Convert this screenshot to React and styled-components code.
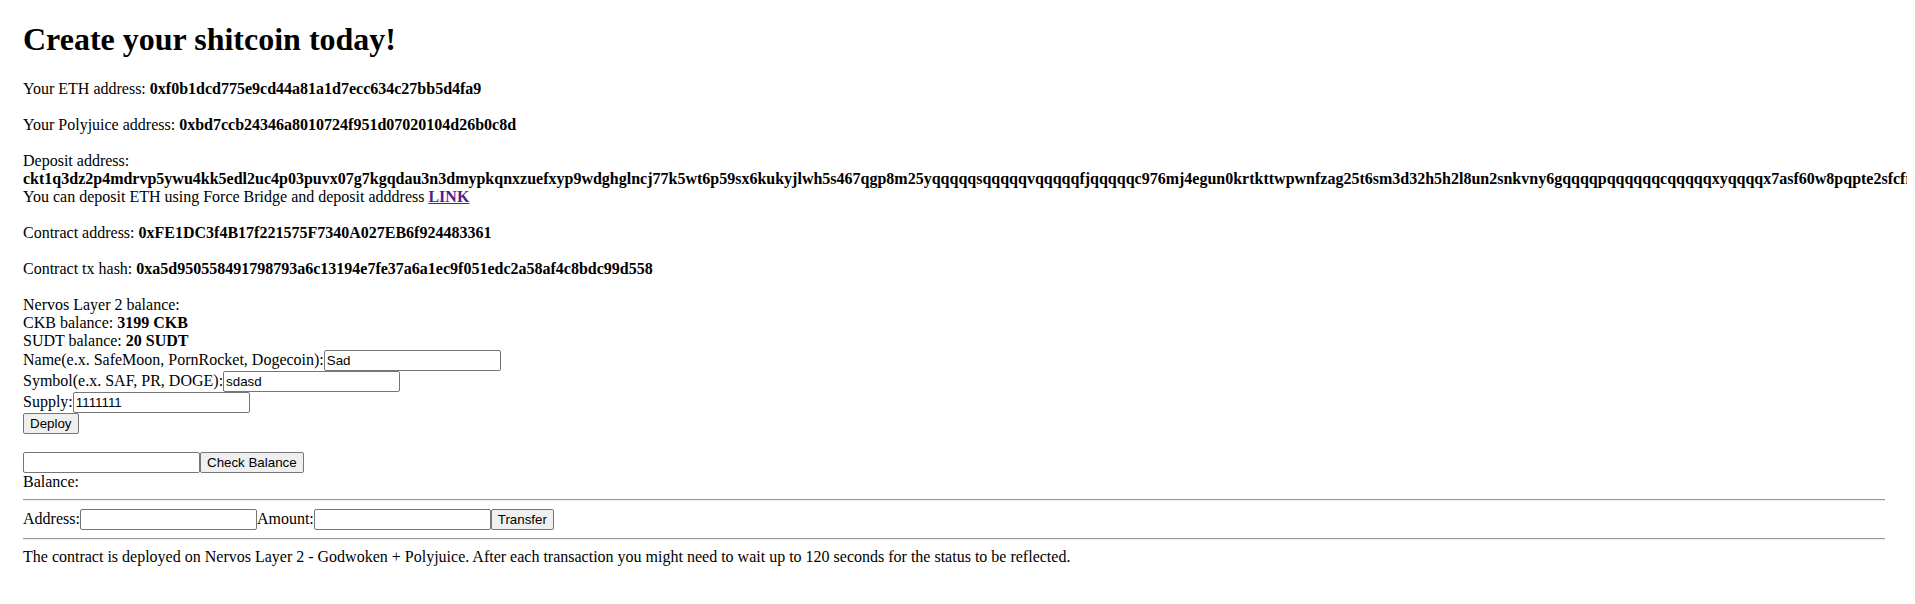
import React from 'react';
import styled, { createGlobalStyle } from 'styled-components';

const GlobalStyle = createGlobalStyle`
  html {
    overflow-x: hidden;
  }
  body {
    margin: 0 8px 8px;
    font-family: "Liberation Serif", "Times New Roman", serif;
    font-size: 16px;
    color: #000;
    background: #fff;
  }
`;

const Page = styled.div`
  padding: 0 22px 0 15px;
  white-space: nowrap;
`;

const Title = styled.h1`
  font-size: 2em;
  font-weight: bold;
  margin: 0.67em 0;
`;

const Value = styled.b`
  font-weight: bold;
`;

const BridgeLink = styled.a`
  color: #551a8b;
  font-weight: bold;
  text-decoration: underline;
  cursor: pointer;
`;

const Field = styled.input`
  box-sizing: border-box;
  width: 177px;
  height: 21px;
  margin: 0;
  padding: 1px 2px;
  border: 1px solid #767676;
  border-radius: 2px;
  font-family: "Liberation Sans", Arial, sans-serif;
  font-size: 13.333px;
  color: #000;
  background: #fff;
`;

const Button = styled.button`
  box-sizing: border-box;
  height: 21px;
  margin: 0;
  padding: 1px 6px;
  border: 1px solid #767676;
  border-radius: 2px;
  font-family: "Liberation Sans", Arial, sans-serif;
  font-size: 13.333px;
  color: #000;
  background: #efefef;
`;

const Rule = styled.hr`
  height: 0;
  margin: 8px 0;
  border: none;
  border-top: 1px solid #9a9a9a;
  border-bottom: 1px solid #eee;
`;

export default function App() {
  return (
    <>
      <GlobalStyle />
      <Page>
        <Title>Create your shitcoin today!</Title>
        Your ETH address: <Value>0xf0b1dcd775e9cd44a81a1d7ecc634c27bb5d4fa9</Value>
        <br />
        <br />
        Your Polyjuice address: <Value>0xbd7ccb24346a8010724f951d07020104d26b0c8d</Value>
        <br />
        <br />
        Deposit address:
        <br />
        <Value>
          ckt1q3dz2p4mdrvp5ywu4kk5edl2uc4p03puvx07g7kgqdau3n3dmypkqnxzuefxyp9wdghglncj77k5wt6p59sx6kukyjlwh5s467qgp8m25yqqqqqsqqqqqvqqqqqfjqqqqqc976mj4egun0krtkttwpwnfzag25t6sm3d32h5h2l8un2snkvny6gqqqqpqqqqqqcqqqqqxyqqqqx7asf60w8pqpte2sfcfnz4x8h3sdqvtyl9
        </Value>
        <br />
        You can deposit ETH using Force Bridge and deposit adddress <BridgeLink href="#">LINK</BridgeLink>
        <br />
        <br />
        Contract address: <Value>0xFE1DC3f4B17f221575F7340A027EB6f924483361</Value>
        <br />
        <br />
        Contract tx hash: <Value>0xa5d950558491798793a6c13194e7fe37a6a1ec9f051edc2a58af4c8bdc99d558</Value>
        <br />
        <br />
        Nervos Layer 2 balance:
        <br />
        CKB balance: <Value>3199 CKB</Value>
        <br />
        SUDT balance: <Value>20 SUDT</Value>
        <br />
        Name(e.x. SafeMoon, PornRocket, Dogecoin):<Field defaultValue="Sad" />
        <br />
        Symbol(e.x. SAF, PR, DOGE):<Field defaultValue="sdasd" />
        <br />
        Supply:<Field defaultValue="1111111" />
        <br />
        <Button>Deploy</Button>
        <br />
        <br />
        <Field />
        <Button>Check Balance</Button>
        <br />
        Balance:
        <br />
        <Rule />
        Address:<Field />Amount:<Field />
        <Button>Transfer</Button>
        <Rule />
        The contract is deployed on Nervos Layer 2 - Godwoken + Polyjuice. After each transaction you might need to wait up to 120 seconds for the status to be reflected.
      </Page>
    </>
  );
}
